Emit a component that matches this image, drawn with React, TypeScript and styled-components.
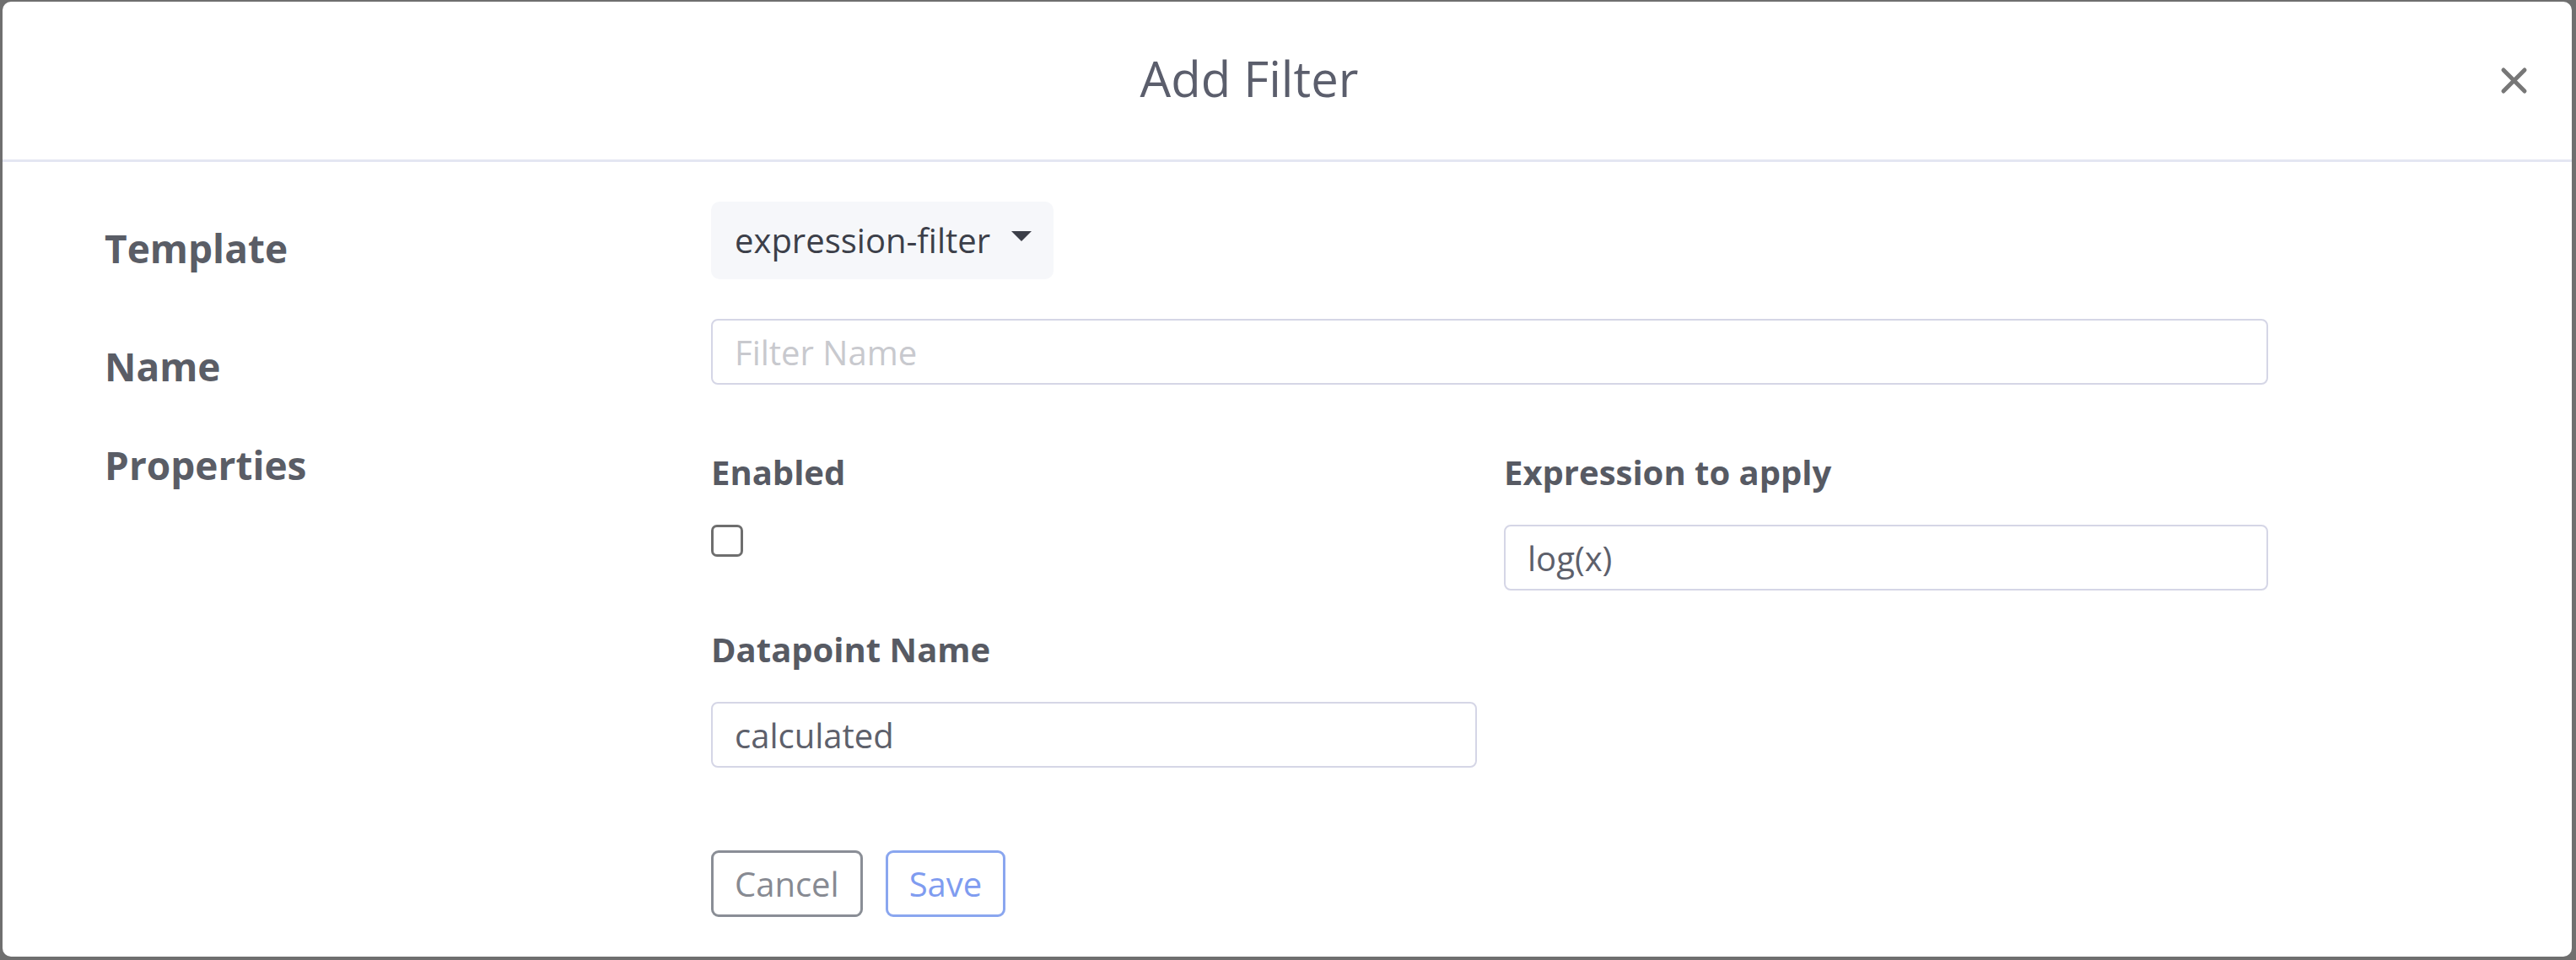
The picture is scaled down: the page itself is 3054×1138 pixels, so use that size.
import styled, { createGlobalStyle } from 'styled-components';

const GlobalStyle = createGlobalStyle`
  html, body {
    margin: 0;
    padding: 0;
    background: #6f6f6f;
    font-family: 'Open Sans', 'Noto Sans', sans-serif;
  }
  * {
    box-sizing: border-box;
  }
`;

const App = () => {
  return (
    <>
      <GlobalStyle />
      <Modal>
        <Header>
          <Title>Add Filter</Title>
          <CloseButton aria-label="Close">
            <svg width="33" height="33" viewBox="0 0 33 33">
              <path
                d="M4 4 L29 29 M29 4 L4 29"
                stroke="#777777"
                strokeWidth="5"
                strokeLinecap="round"
              />
            </svg>
          </CloseButton>
        </Header>
        <Body>
          <Row>
            <RowLabel $offset={21}>Template</RowLabel>
            <div>
              <Dropdown>
                expression-filter
                <Caret />
              </Dropdown>
            </div>
          </Row>
          <Row $gap={47}>
            <RowLabel $offset={22}>Name</RowLabel>
            <TextInput placeholder="Filter Name" />
          </Row>
          <Row $gap={52}>
            <RowLabel $offset={-4}>Properties</RowLabel>
            <PropGrid>
              <Field>
                <FieldLabel>Enabled</FieldLabel>
                <Checkbox type="checkbox" />
              </Field>
              <Field>
                <FieldLabel>Expression to apply</FieldLabel>
                <TextInput defaultValue="log(x)" />
              </Field>
              <Field>
                <FieldLabel>Datapoint Name</FieldLabel>
                <TextInput defaultValue="calculated" />
              </Field>
            </PropGrid>
          </Row>
          <Actions>
            <Button $variant="secondary">Cancel</Button>
            <Button $variant="primary">Save</Button>
          </Actions>
        </Body>
      </Modal>
    </>
  );
};
export default App;

const Modal = styled.div`
  margin: 2px 5px 4px 3px;
  height: 1132px;
  background: #ffffff;
  border-radius: 10px;
  display: flex;
  flex-direction: column;
  overflow: hidden;
`;

const Header = styled.div`
  height: 190px;
  display: flex;
  align-items: center;
  padding: 0 52px;
  border-bottom: 3px solid #e4e6f2;
`;

const Title = styled.h2`
  flex: 1;
  margin: 0 0 6px;
  text-align: center;
  font-size: 58px;
  font-weight: 400;
  line-height: 1.2;
  color: #5b5e6c;
`;

const CloseButton = styled.button`
  margin-left: 57px;
  padding: 0;
  border: none;
  background: none;
  width: 33px;
  height: 33px;
  display: flex;
  cursor: pointer;
`;

const Body = styled.div`
  padding: 47px 0 0 121px;
`;

const Row = styled.div<{ $gap?: number }>`
  display: grid;
  grid-template-columns: 719px 1846px;
  margin-top: ${(p) => p.$gap ?? 0}px;
`;

const RowLabel = styled.div<{ $offset: number }>`
  margin-top: ${(p) => p.$offset}px;
  font-size: 46px;
  font-weight: 700;
  line-height: 69px;
  color: #5a5d66;
`;

const Dropdown = styled.div`
  display: inline-flex;
  align-items: center;
  height: 92px;
  padding: 0 26px 0 28px;
  background: #f6f7fa;
  border-radius: 10px;
  font-size: 40px;
  line-height: 60px;
  color: #3c3f49;
`;

const Caret = styled.span`
  margin-left: 25px;
  width: 0;
  height: 0;
  border-left: 12.5px solid transparent;
  border-right: 12.5px solid transparent;
  border-top: 12px solid #3c3f49;
  margin-top: -10px;
`;

const TextInput = styled.input`
  width: 100%;
  height: 78px;
  padding: 0 26px;
  border: 2px solid #d5d6e6;
  border-radius: 8px;
  font-family: 'Open Sans', 'Noto Sans', sans-serif;
  font-size: 40px;
  color: #5d606b;
  background: #ffffff;
  outline: none;
  &::placeholder {
    color: #c8c9ce;
  }
`;

const PropGrid = styled.div`
  display: grid;
  grid-template-columns: 908px 906px;
  column-gap: 32px;
  row-gap: 40px;
  padding-top: 9px;
  align-items: start;
`;

const Field = styled.div`
  display: flex;
  flex-direction: column;
  align-items: flex-start;
`;

const FieldLabel = styled.label`
  font-size: 40px;
  font-weight: 700;
  line-height: 60px;
  color: #575a63;
  margin-bottom: 32px;
`;

const Checkbox = styled.input`
  appearance: none;
  margin: 0;
  width: 38px;
  height: 38px;
  border: 3px solid #6e6e6e;
  border-radius: 7px;
  background: #ffffff;
`;

const Actions = styled.div`
  display: flex;
  gap: 27px;
  margin: 98px 0 0 719px;
`;

const Button = styled.button<{ $variant: 'primary' | 'secondary' }>`
  height: 79px;
  padding: 0 25px;
  background: #ffffff;
  border: 3px solid
    ${(p) => (p.$variant === 'primary' ? '#8aa6ef' : '#8a8e96')};
  border-radius: 9px;
  font-family: 'Open Sans', 'Noto Sans', sans-serif;
  font-size: 40px;
  line-height: 60px;
  color: ${(p) => (p.$variant === 'primary' ? '#7f9cf0' : '#878a92')};
  cursor: pointer;
`;
